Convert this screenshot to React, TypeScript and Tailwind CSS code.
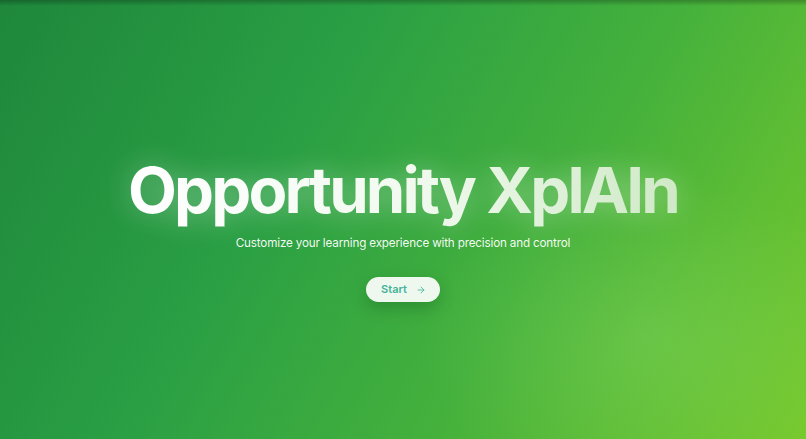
import { ArrowRight } from "lucide-react"

export default function App() {
  return (
    <div className="relative flex h-[439px] w-full flex-col items-center overflow-hidden bg-[linear-gradient(120deg,#1e873b_0%,#2a9f44_35%,#45b13c_65%,#77c92c_100%)] font-['Inter',sans-serif]">
      <div className="pointer-events-none absolute inset-x-0 top-0 h-[6px] bg-gradient-to-b from-black/25 to-transparent" />
      <div className="pointer-events-none absolute left-[420px] top-[180px] h-[320px] w-[460px] rounded-full bg-[radial-gradient(closest-side,rgba(140,220,110,0.3),transparent)]" />

      <h1 className="relative mt-[151px] bg-gradient-to-r from-white via-[#f2faf0] to-[#cfe9c6] bg-clip-text text-[63.5px] font-bold leading-[78px] tracking-[-0.045em] text-transparent [filter:drop-shadow(0_0_14px_rgba(255,255,255,0.35))]">
        Opportunity XplAIn
      </h1>
      <p className="relative mt-[4px] text-[11.7px] leading-5 tracking-[-0.015em] text-white/95">
        Customize your learning experience with precision and control
      </p>
      <button
        className="relative mt-[24px] inline-flex h-[25px] items-center gap-[9px] rounded-full bg-[#eef8ee] pl-[15px] pr-[14px] text-[11px] font-semibold text-[#45b39a] shadow-[0_6px_16px_rgba(0,60,20,0.25)]"
        type="button"
      >
        Start
        <ArrowRight className="h-[10px] w-[10px]" strokeWidth={2} />
      </button>
    </div>
  )
}
